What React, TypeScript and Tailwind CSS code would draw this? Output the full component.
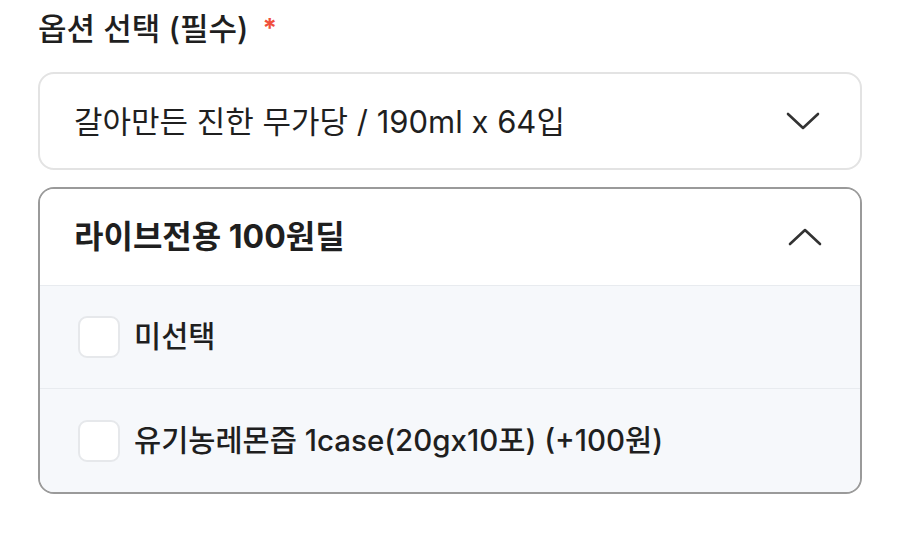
export default function App() {
  const font = { fontFamily: 'Inter, "Noto Sans CJK KR", "Noto Sans", sans-serif' };
  return (
    <div className="w-[900px] h-[542px] bg-white text-[#1f1f1f]" style={font}>
      <div className="px-[38px] pt-[8px]">
        <div className="flex items-center h-[40px] text-[31px] font-medium leading-none">
          <span>옵션 선택 (필수)</span>
          <span className="ml-[14px] text-[#f0503c] text-[26px] font-bold">*</span>
        </div>

        <div className="mt-[24px] h-[98px] rounded-[16px] border-2 border-[#e3e3e3] flex items-center justify-between pl-[34px] pr-[40px]">
          <span className="text-[31px] leading-none">갈아만든 진한 무가당 / 190ml x 64입</span>
          <svg width="34" height="20" viewBox="0 0 34 20" fill="none">
            <path d="M2 3 L17 17 L32 3" stroke="#333" strokeWidth="2.6" strokeLinecap="round" strokeLinejoin="round" />
          </svg>
        </div>

        <div className="mt-[17px] rounded-[16px] border-2 border-[#9a9a9a] overflow-hidden">
          <div className="h-[97px] bg-white flex items-center justify-between pl-[34px] pr-[38px] border-b border-[#e8ebef]">
            <span className="text-[32px] font-bold leading-none">라이브전용 100원딜</span>
            <svg width="34" height="20" viewBox="0 0 34 20" fill="none">
              <path d="M2 17 L17 3 L32 17" stroke="#333" strokeWidth="2.6" strokeLinecap="round" strokeLinejoin="round" />
            </svg>
          </div>
          <div className="bg-[#f6f8fb]">
            <div className="h-[103px] flex items-center pl-[38px] border-b border-[#e8ebef]">
              <span className="w-[42px] h-[42px] rounded-[9px] border-2 border-[#e6e8eb] bg-white" />
              <span className="ml-[14px] text-[29.5px] font-medium leading-none">미선택</span>
            </div>
            <div className="h-[103px] flex items-center pl-[38px]">
              <span className="w-[42px] h-[42px] rounded-[9px] border-2 border-[#e6e8eb] bg-white" />
              <span className="ml-[14px] text-[29.5px] font-medium leading-none">유기농레몬즙 1case(20gx10포) (+100원)</span>
            </div>
          </div>
        </div>
      </div>
    </div>
  );
}
